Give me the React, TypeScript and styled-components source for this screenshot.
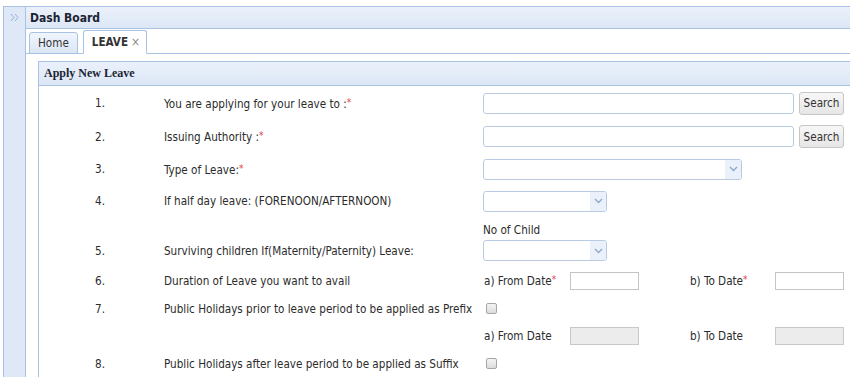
import React from 'react';
import styled, { createGlobalStyle } from 'styled-components';

const GlobalStyle = createGlobalStyle`
  html, body {
    margin: 0;
    padding: 0;
    background: #ffffff;
  }
  body {
    font-family: "DejaVu Sans Condensed", "DejaVu Sans", Verdana, sans-serif;
    font-size: 11.6px;
    color: #2b2b2b;
    overflow: hidden;
  }
`;

const Page = styled.div`
  display: flex;
  height: 377px;
  padding: 6px 0 0 3px;
  box-sizing: border-box;
`;

const SideBar = styled.div`
  width: 21px;
  flex-shrink: 0;
  background: #dfe8f6;
  border: 1px solid #a9c2e3;
  border-bottom: none;
  display: flex;
  justify-content: center;
  padding-top: 6px;
  box-sizing: content-box;
`;

const Main = styled.div`
  flex: 1;
  display: flex;
  flex-direction: column;
  min-width: 0;
`;

const TitleBar = styled.div`
  height: 21px;
  display: flex;
  align-items: center;
  padding-left: 4px;
  background: linear-gradient(#ebf1fb, #dce7f6);
  border-top: 1px solid #a9c2e3;
  border-bottom: 1px solid #a9c2e3;
  font-weight: bold;
  font-size: 12px;
  color: #1c2433;
`;

const TabStrip = styled.div`
  height: 24px;
  display: flex;
  align-items: flex-end;
  gap: 5px;
  padding-left: 3px;
  border-bottom: 1px solid #a9c2e3;
`;

const Tab = styled.div<{ $active?: boolean }>`
  height: ${(p) => (p.$active ? '22px' : '20px')};
  margin-bottom: -1px;
  padding: ${(p) => (p.$active ? '0 6px 0 8px' : '0 8px')};
  display: flex;
  align-items: center;
  gap: 3px;
  border: 1px solid #a9c2e3;
  border-bottom: ${(p) => (p.$active ? '1px solid #ffffff' : '1px solid #a9c2e3')};
  border-radius: 3px 3px 0 0;
  background: ${(p) => (p.$active ? '#ffffff' : 'linear-gradient(#f1f5fc, #dbe6f5)')};
  font-weight: ${(p) => (p.$active ? 'bold' : 'normal')};
  font-size: 11.6px;
  color: #333;
`;

const Close = styled.span`
  font-weight: normal;
  color: #8a8a8a;
  font-size: 12px;
`;

const Body = styled.div`
  flex: 1;
  padding: 7px 0 0 12px;
`;

const Panel = styled.div`
  border-left: 1px solid #a9c2e3;
  border-top: 1px solid #a9c2e3;
  height: 100%;
`;

const PanelHeader = styled.div`
  height: 23px;
  display: flex;
  align-items: center;
  padding-left: 5px;
  background: linear-gradient(#ebf1fb, #dce7f6);
  border-bottom: 1px solid #a9c2e3;
  font-family: "Liberation Serif", "Times New Roman", serif;
  font-weight: bold;
  font-size: 12px;
  color: #1c2433;
`;

const Row = styled.div<{ $h: number; $align?: string }>`
  display: grid;
  grid-template-columns: 125px 319px 1fr;
  height: ${(p) => p.$h}px;
  align-items: ${(p) => p.$align || 'center'};
`;

const Num = styled.div<{ $pb?: number }>`
  padding-left: 56px;
  padding-bottom: ${(p) => p.$pb || 0}px;
  line-height: 20px;
`;

const Label = styled.div<{ $pb?: number }>`
  white-space: nowrap;
  padding-bottom: ${(p) => p.$pb || 0}px;
  line-height: 20px;
`;

const Req = styled.span`
  color: #e2404a;
  font-size: 10px;
  vertical-align: 2px;
`;

const Controls = styled.div`
  display: flex;
  align-items: center;
  gap: 5px;
`;

const TextBox = styled.div<{ $w: number }>`
  width: ${(p) => p.$w}px;
  height: 19px;
  border: 1px solid #b9cbe2;
  border-radius: 3px;
  background: #fff;
`;

const SearchButton = styled.div`
  width: 43px;
  height: 21px;
  border: 1px solid #c6c6c6;
  border-radius: 3px;
  background: linear-gradient(#f7f7f7, #e6e6e6);
  display: flex;
  align-items: center;
  justify-content: center;
  color: #333;
`;

const Select = styled.div<{ $w: number }>`
  width: ${(p) => p.$w}px;
  height: 19px;
  border: 1px solid #b9cbe2;
  border-radius: 3px;
  background: #fff;
  display: flex;
  justify-content: flex-end;
  overflow: hidden;
`;

const Arrow = styled.div`
  width: 16px;
  height: 100%;
  background: #eaf1fa;
  display: flex;
  align-items: center;
  justify-content: center;
`;

const Stack = styled.div<{ $pb?: number }>`
  display: flex;
  flex-direction: column;
  gap: 3px;
  padding-bottom: ${(p) => p.$pb || 0}px;
`;

const DateGrid = styled.div`
  display: grid;
  grid-template-columns: 86px 120px 85px 70px;
  align-items: center;
  padding-left: 1px;
`;

const DateBox = styled.div<{ $disabled?: boolean }>`
  width: 67px;
  height: 16px;
  border: 1px solid ${(p) => (p.$disabled ? '#c8c8c8' : '#c4c4c4')};
  background: ${(p) => (p.$disabled ? '#ececec' : '#ffffff')};
`;

const Check = styled.div`
  width: 9px;
  height: 9px;
  margin-left: 3px;
  border: 1px solid #a6a6a6;
  border-radius: 2px;
  background: linear-gradient(#f4f4f4, #dcdcdc);
`;

const Chevron = () => (
  <svg width="9" height="6" viewBox="0 0 9 6">
    <path d="M1 1 L4.5 4.5 L8 1" fill="none" stroke="#8fa9cc" strokeWidth="1.4" />
  </svg>
);

const DoubleChevron = () => (
  <svg width="10" height="9" viewBox="0 0 10 9">
    <path d="M1 1 L4 4.5 L1 8 M5 1 L8 4.5 L5 8" fill="none" stroke="#8fb0dc" strokeWidth="1" />
  </svg>
);

const Dropdown: React.FC<{ w: number }> = ({ w }) => (
  <Select $w={w}>
    <Arrow>
      <Chevron />
    </Arrow>
  </Select>
);

const App: React.FC = () => (
  <>
    <GlobalStyle />
    <Page>
      <SideBar>
        <DoubleChevron />
      </SideBar>
      <Main>
        <TitleBar>Dash Board</TitleBar>
        <TabStrip>
          <Tab>Home</Tab>
          <Tab $active>
            LEAVE <Close>×</Close>
          </Tab>
        </TabStrip>
        <Body>
          <Panel>
            <PanelHeader>Apply New Leave</PanelHeader>

            <Row $h={34}>
              <Num>1.</Num>
              <Label>
                You are applying for your leave to :<Req>*</Req>
              </Label>
              <Controls>
                <TextBox $w={309} />
                <SearchButton>Search</SearchButton>
              </Controls>
            </Row>

            <Row $h={33}>
              <Num>2.</Num>
              <Label>
                Issuing Authority :<Req>*</Req>
              </Label>
              <Controls>
                <TextBox $w={309} />
                <SearchButton>Search</SearchButton>
              </Controls>
            </Row>

            <Row $h={32}>
              <Num>3.</Num>
              <Label>
                Type of Leave:<Req>*</Req>
              </Label>
              <Controls>
                <Dropdown w={257} />
              </Controls>
            </Row>

            <Row $h={32}>
              <Num>4.</Num>
              <Label>If half day leave: (FORENOON/AFTERNOON)</Label>
              <Controls>
                <Dropdown w={122} />
              </Controls>
            </Row>

            <Row $h={49} $align="end">
              <Num $pb={5}>5.</Num>
              <Label $pb={5}>Surviving children If(Maternity/Paternity) Leave:</Label>
              <Stack $pb={5}>
                <span>No of Child</span>
                <Dropdown w={122} />
              </Stack>
            </Row>

            <Row $h={30}>
              <Num>6.</Num>
              <Label>Duration of Leave you want to avail</Label>
              <DateGrid>
                <span>
                  a) From Date<Req>*</Req>
                </span>
                <DateBox />
                <span>
                  b) To Date<Req>*</Req>
                </span>
                <DateBox />
              </DateGrid>
            </Row>

            <Row $h={25}>
              <Num>7.</Num>
              <Label>Public Holidays prior to leave period to be applied as Prefix</Label>
              <Controls>
                <Check />
              </Controls>
            </Row>

            <Row $h={29}>
              <Num />
              <Label />
              <DateGrid>
                <span>a) From Date</span>
                <DateBox $disabled />
                <span>b) To Date</span>
                <DateBox $disabled />
              </DateGrid>
            </Row>

            <Row $h={27}>
              <Num>8.</Num>
              <Label>Public Holidays after leave period to be applied as Suffix</Label>
              <Controls>
                <Check />
              </Controls>
            </Row>
          </Panel>
        </Body>
      </Main>
    </Page>
  </>
);

export default App;
